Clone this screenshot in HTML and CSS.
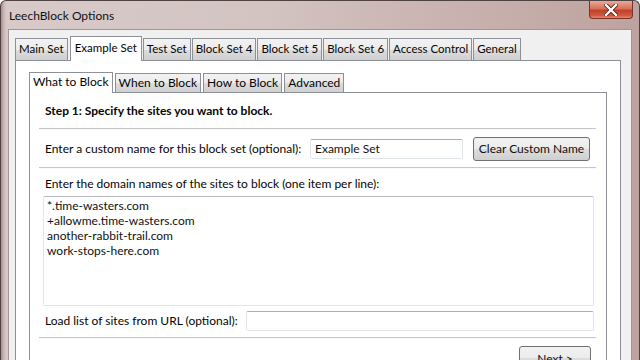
FILE: index.html
```html
<!DOCTYPE html>
<html lang="en">
<head>
  <meta charset="UTF-8">
  <title>LeechBlock Options</title>
  <link rel="stylesheet" href="styles.css">
</head>
<body>
  <div class="window">
    <div class="titlebar">
      <span class="title">LeechBlock Options</span>
      <span class="close">
        <svg width="14" height="12" viewBox="0 0 14 12">
          <path d="M2 1 L12 11 M12 1 L2 11" stroke="#5a1c12" stroke-width="4" stroke-linecap="square"/>
          <path d="M2 1 L12 11 M12 1 L2 11" stroke="#fff" stroke-width="2.4" stroke-linecap="square"/>
        </svg>
      </span>
    </div>

    <div class="client">
      <div class="tabs outer-tabs">
        <div class="tab">Main Set</div>
        <div class="tab selected">Example Set</div>
        <div class="tab">Test Set</div>
        <div class="tab">Block Set 4</div>
        <div class="tab">Block Set 5</div>
        <div class="tab">Block Set 6</div>
        <div class="tab">Access Control</div>
        <div class="tab">General</div>
      </div>

      <div class="panel outer-panel">
        <div class="tabs inner-tabs">
          <div class="tab selected">What to Block</div>
          <div class="tab">When to Block</div>
          <div class="tab">How to Block</div>
          <div class="tab">Advanced</div>
        </div>

        <div class="panel inner-panel">
          <div class="step">Step 1: Specify the sites you want to block.</div>
          <div class="sep"></div>

          <div class="row name-row">
            <label class="name-label">Enter a custom name for this block set (optional):</label>
            <input class="field name-field" type="text" value="Example Set">
            <button class="btn">Clear Custom Name</button>
          </div>
          <div class="sep"></div>

          <div class="sites-label">Enter the domain names of the sites to block (one item per line):</div>
          <textarea class="sites">*.time-wasters.com
+allowme.time-wasters.com
another-rabbit-trail.com
work-stops-here.com</textarea>

          <div class="row url-row">
            <label class="url-label">Load list of sites from URL (optional):</label>
            <input class="field url-field" type="text" value="">
          </div>
          <div class="sep"></div>

          <div class="actions">
            <button class="btn next">Next &gt;</button>
          </div>
        </div>
      </div>
    </div>
  </div>
</body>
</html>
```

FILE: styles.css
```css
html, body {
  margin: 0;
  padding: 0;
  width: 640px;
  height: 360px;
  overflow: hidden;
  font-family: Lato, "Open Sans", sans-serif;
  font-size: 12px;
  color: #050505;
}

/* Window frame */
.window {
  height: 360px;
  box-sizing: border-box;
  border: 1px solid #4e4242;
  border-bottom: none;
  border-radius: 6px 6px 0 0;
  padding: 0 7px 0 7px;
  display: flex;
  flex-direction: column;
  overflow: hidden;
  background: linear-gradient(to right, #a58c89 0px, #cbbab8 3px, #d7cac8 6px, #d3c4c2 40%, #c7b0ad 75%, #bda39f 100%);
}

.titlebar {
  flex: 0 0 28px;
  display: flex;
  align-items: flex-start;
  justify-content: space-between;
}

.title {
  margin-top: 7px;
  padding-left: 1px;
  font-size: 12px;
  color: #111;
}

.close {
  width: 44px;
  height: 18px;
  margin-right: -1px;
  box-sizing: border-box;
  border: 1px solid #7d3226;
  border-top: none;
  border-radius: 0 0 4px 4px;
  background: linear-gradient(to bottom, #e9a99a 0%, #d8705b 45%, #c2412a 55%, #cf5a40 85%, #e48a6f 100%);
  display: flex;
  align-items: center;
  justify-content: center;
}

/* Client area */
.client {
  flex: 1;
  min-height: 0;
  background: #f0f0f0;
  border: 1px solid #a49494;
  border-bottom: none;
  padding: 6px 10px 0 6px;
  display: flex;
  flex-direction: column;
}

/* Tabs */
.tabs {
  display: flex;
  align-items: flex-end;
  flex-shrink: 0;
  position: relative;
  z-index: 1;
}

.tab {
  box-sizing: border-box;
  border: 1px solid #8e9099;
  border-bottom: none;
  background: linear-gradient(to bottom, #f2f2f2 0%, #ebebeb 50%, #dddddd 51%, #cfcfcf 100%);
  margin-right: 2px;
  white-space: nowrap;
}

.tab.selected {
  background: #fff;
  margin-bottom: -1px;
}

.outer-tabs .tab {
  height: 22px;
  line-height: 20px;
  padding: 0 3px;
  margin-right: 1px;
  font-size: 11.5px;
}

.outer-tabs .tab.selected {
  height: 25px;
  line-height: 22px;
  padding: 0 4px;
  margin-left: 1px;
}

.inner-tabs .tab {
  height: 19px;
  line-height: 17px;
  padding: 0 3px;
}

.inner-tabs .tab.selected {
  height: 21px;
  line-height: 18px;
}

.panel {
  background: #fff;
  border: 1px solid #8e9099;
}

.outer-panel {
  flex: 1;
  min-height: 0;
  border-bottom: none;
  padding: 11px 13px 0 13px;
  display: flex;
  flex-direction: column;
}

.inner-panel {
  flex: 1;
  min-height: 0;
  border-bottom: none;
  padding: 0 10px 0 9px;
  display: flex;
  flex-direction: column;
}

/* Inner content */
.step {
  font-weight: bold;
  line-height: 16px;
  padding: 10px 0 9px 6px;
}

.sep {
  flex-shrink: 0;
  height: 1px;
  background: #c6c6c6;
  border-bottom: 1px solid #fafafa;
}

.row {
  display: flex;
  align-items: center;
  flex-shrink: 0;
  padding-left: 6px;
}

.name-row {
  height: 37px;
}

.name-label {
  flex: 0 0 265px;
}

.url-label {
  flex: 0 0 200px;
}

.field {
  box-sizing: border-box;
  height: 20px;
  border: 1px solid #e0e5ea;
  border-top-color: #abadb3;
  border-radius: 2px;
  padding: 0 4px;
  font: inherit;
  color: #111;
  outline: none;
}

.name-field {
  width: 153px;
}

.url-field {
  width: 348px;
}

.btn {
  box-sizing: border-box;
  height: 24px;
  border: 1px solid #707070;
  border-radius: 3px;
  background: linear-gradient(to bottom, #f2f2f2 0%, #ebebeb 50%, #dddddd 51%, #cfcfcf 100%);
  font: inherit;
  color: #111;
  padding: 0;
  white-space: nowrap;
}

.name-row .btn {
  width: 117px;
  margin-left: 10px;
}

.sites-label {
  flex-shrink: 0;
  line-height: 16px;
  padding: 7px 0 0 6px;
}

.sites {
  flex-shrink: 0;
  box-sizing: border-box;
  height: 110px;
  margin: 4px 2px 0 4px;
  border: 1px solid #e0e5ea;
  border-top-color: #b8bcc2;
  border-radius: 2px;
  padding: 1px 3px;
  font: inherit;
  line-height: 15px;
  color: #111;
  resize: none;
  outline: none;
  overflow: hidden;
}

.url-row {
  box-sizing: border-box;
  height: 31px;
  padding-top: 2px;
  padding-bottom: 4px;
}

.url-row .field {
  margin-left: 1px;
}

.actions {
  flex-shrink: 0;
  display: flex;
  justify-content: flex-end;
  padding: 7px 5px 0 0;
}

.btn.next {
  width: 72px;
}
```
